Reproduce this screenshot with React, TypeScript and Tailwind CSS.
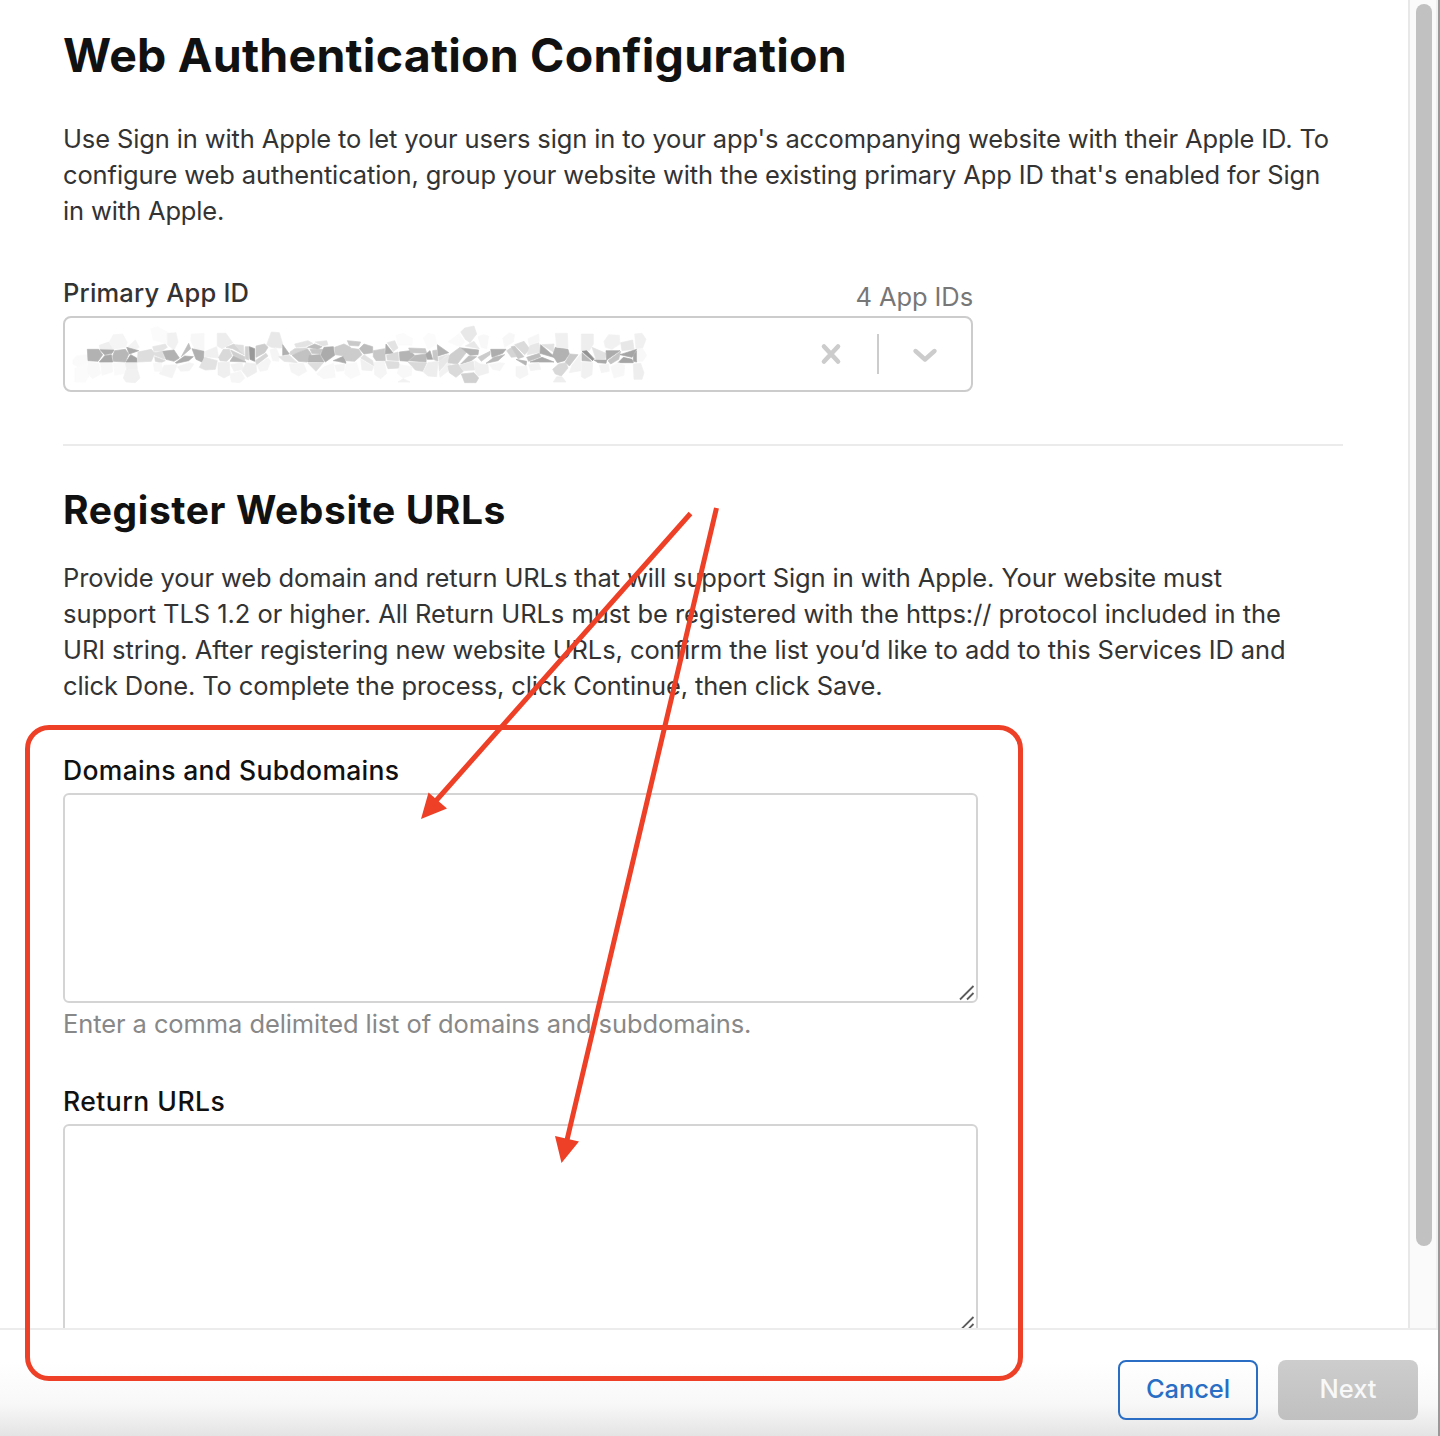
const RED = '#ee4026';

type Shape = [fill: string, points: string];

// Faceted tiles that hide the selected app identifier, left half.
const leftTiles: Shape[] = [
  ['#fafafa', '38,150 50,137 84,134 86,154 60,174 38,162'],
  ['#fbfbfb', '44,176 80,158 88,196 76,216 44,216'],
  ['#f9f9f9', '84,156 116,160 122,192 98,206 84,192'],
  ['#f8f8f8', '122,158 156,160 158,186 126,196'],
  ['#fafafa', '160,158 196,160 198,190 164,196'],
  ['#f0f0f0', '196,158 230,158 232,176 200,180'],
  ['#f1f1f1', '198,180 232,178 240,204 226,218 198,216 190,204'],
  ['#f5f5f5', '148,96 160,74 188,72 202,98 196,112 158,118'],
  ['#efefef', '118,106 146,96 158,118 120,118'],
  ['#f3f3f3', '204,110 226,90 238,112 226,118'],
  ['#fbfbfb', '272,56 292,50 322,66 318,100 280,90'],
  ['#f1f1f1', '322,70 348,68 354,96 342,120 322,104'],
  ['#f7f7f7', '394,72 432,70 432,122 404,116 392,92'],
  ['#b2b2b2', '82,118 116,118 128,134 114,154 84,152'],
  ['#ababab', '120,119 162,120 156,130 134,134'],
  ['#a8a8a8', '118,156 134,137 154,134 158,156'],
  ['#b7b7b7', '164,122 196,118 206,132 196,156 160,154 158,138'],
  ['#a9a9a9', '200,112 236,122 208,132'],
  ['#a4a4a4', '198,156 212,134 230,144 232,156'],
  ['#dddddd', '234,126 274,118 284,130 274,154 232,156'],
  ['#e5e5e5', '278,110 316,102 322,112 306,122 282,124'],
  ['#dedede', '282,128 306,124 314,148 284,136'],
  ['#d8d8d8', '284,140 316,152 302,158 286,154'],
  ['#b2b2b2', '308,124 342,120 358,144 342,154 318,148'],
  ['#bdbdbd', '364,140 386,100 392,116'],
  ['#ababab', '346,158 374,138 400,140 386,152 350,160'],
  ['#b0b0b0', '396,116 432,124 430,158 408,148'],
  ['#f0f0f0', '436,124 470,110 476,144 436,140'],
  ['#e2e2e2', '418,172 434,142 472,152 466,178 436,180'],
  ['#f4f4f4', '312,166 352,164 336,204 298,192'],
  ['#f4f4f4', '352,170 388,158 402,162 388,182 362,184'],
  ['#f8f8f8', '280,160 304,158 306,184 284,184'],
  ['#ededed', '472,70 498,70 518,98 486,116 472,108'],
  ['#d9d9d9', '476,142 490,118 508,118 516,138 500,154 480,152'],
  ['#d5d5d5', '498,112 522,102 552,134 518,116'],
  ['#cfcfcf', '512,120 554,140 554,154 520,136'],
  ['#b7b7b7', '510,154 520,138 558,156'],
  ['#dfdfdf', '524,104 550,106 552,134'],
  ['#d0d0d0', '556,110 566,110 566,150 556,146'],
  ['#999999', '568,110 584,116 584,154 570,148'],
  ['#cccccc', '588,108 614,102 624,112 614,128 588,142'],
  ['#d6d6d6', '586,152 618,130 624,138 590,164'],
  ['#efefef', '474,158 508,156 510,194 492,204 474,194'],
  ['#f2f2f2', '512,164 546,158 550,178 522,184'],
  ['#eeeeee', '546,182 558,158 588,162 590,186 562,202'],
  ['#f6f6f6', '510,192 542,184 554,204 540,218 514,216'],
  ['#f5f5f5', '592,166 624,144 632,154 622,180 600,184'],
  ['#e8e8e8', '620,104 634,66 658,68 668,102 664,114 634,112'],
  ['#f5f5f5', '630,120 648,114 658,136 656,154 638,152'],
  ['#b0b0b0', '668,104 688,132 668,136'],
  ['#e4e4e4', '656,140 688,136 712,158 672,154'],
  ['#d5d5d5', '690,126 704,116 740,114 714,130 692,134'],
  ['#c2c2c2', '696,136 742,116 754,132 742,156 716,154'],
  ['#bcbcbc', '742,112 764,102 786,110 774,118'],
  ['#c5c5c5', '750,118 788,118 780,132 756,130'],
  ['#b4b4b4', '748,136 780,134 792,156 744,156'],
  ['#ababab', '782,134 792,112 820,110 824,136 796,156'],
  ['#e3e3e3', '704,102 744,92 758,100 736,110 708,112'],
  ['#e2e2e2', '766,96 800,92 804,104 788,108'],
  ['#cccccc', '824,112 852,102 872,112 856,138 826,134'],
  ['#ababab', '820,152 852,138 858,160 834,154'],
  ['#dedede', '744,160 790,158 768,184'],
  ['#f5f5f5', '688,162 730,160 740,184 716,198 694,186'],
  ['#f8f8f8', '792,170 820,160 826,202 790,206 770,192'],
  ['#f5f5f5', '824,166 854,162 852,182 830,184'],
];

// Right half of the same run of tiles.
const rightTiles: Shape[] = [
  ['#c9c9c9', '22,92 62,96 56,108 28,106'],
  ['#bcbcbc', '58,116 72,102 98,110 98,128 72,132'],
  ['#cccccc', '10,140 28,114 56,118 66,134 44,154 18,152'],
  ['#f9f9f9', '18,162 50,158 60,194 32,206 14,192'],
  ['#e2e2e2', '62,144 72,134 98,152 102,168'],
  ['#f0f0f0', '62,148 100,170 96,182 66,180'],
  ['#c7c7c7', '100,122 134,116 136,152 108,152 100,140'],
  ['#adadad', '138,102 160,130 136,132'],
  ['#e3e3e3', '142,98 164,92 174,114 160,124'],
  ['#d9d9d9', '140,136 174,126 176,152 142,150'],
  ['#dddddd', '136,154 176,156 180,174 144,176'],
  ['#f5f5f5', '102,158 132,154 140,190 122,206 104,194'],
  ['#fbfbfb', '168,76 190,70 218,86 216,106 174,106'],
  ['#fbfbfb', '250,84 264,70 284,74 290,102 264,118'],
  ['#b4b4b4', '178,126 210,122 224,136 204,154 180,152'],
  ['#c7c7c7', '206,114 256,116 260,130 212,128'],
  ['#bababa', '208,152 226,136 260,132 258,156'],
  ['#a8a8a8', '258,132 270,122 278,148 262,148'],
  ['#c8c8c8', '278,122 290,120 294,154 280,148'],
  ['#b2b2b2', '292,104 326,128 294,138'],
  ['#e4e4e4', '296,142 322,134 298,154'],
  ['#d9d9d9', '204,156 260,158 248,184 226,180'],
  ['#f8f8f8', '180,164 216,170 214,196 188,204 172,190'],
  ['#f2f2f2', '174,216 190,206 210,216'],
  ['#ededed', '250,186 264,158 294,154 290,200 264,198'],
  ['#e7e7e7', '296,156 326,134 334,142 298,184'],
  ['#f2f2f2', '298,188 334,146 328,180 300,202'],
  ['#cecece', '330,134 360,112 380,126 352,162 324,158'],
  ['#b3b3b3', '364,114 416,120 414,134 390,136'],
  ['#e8e8e8', '376,108 402,94 418,116'],
  ['#e8e8e8', '362,66 374,54 402,48 410,72 390,98 376,88'],
  ['#fafafa', '324,96 358,70 374,96 360,110'],
  ['#f8f8f8', '414,80 430,74 446,78 440,116 424,112'],
  ['#bfbfbf', '362,162 386,138 410,140 394,152'],
  ['#cccccc', '414,142 450,124 450,134 424,154'],
  ['#adadad', '452,118 498,118 488,130 456,142'],
  ['#b8b8b8', '438,160 462,142 494,134 474,152'],
  ['#dadada', '324,168 354,162 370,184 348,202 328,188'],
  ['#d0d0d0', '364,192 402,188 416,204 408,218 374,218'],
  ['#e8e8e8', '358,166 400,154 404,180 370,182'],
  ['#f0f0f0', '404,152 420,162 444,164 446,188 414,198 406,186'],
  ['#f6f6f6', '448,164 480,158 494,160 480,182 458,178'],
  ['#f7f7f7', '488,84 508,68 524,74 520,96 494,112'],
  ['#d4d4d4', '500,122 516,112 530,140 514,142'],
  ['#c8c8c8', '514,110 524,108 552,140 534,146'],
  ['#dbdbdb', '524,104 552,94 570,118 554,134'],
  ['#e7e7e7', '570,106 596,98 604,126 562,134'],
  ['#b4b4b4', '528,148 560,154 558,166'],
  ['#bebebe', '560,142 598,130 602,140 566,154'],
  ['#aaaaaa', '602,104 648,144 600,130'],
  ['#aaaaaa', '570,156 606,142 642,156'],
  ['#e2e2e2', '606,104 642,102 640,126'],
  ['#b2b2b2', '638,136 646,112 684,118 688,132 674,152 652,158'],
  ['#f0f0f0', '646,70 682,70 684,114 650,112'],
  ['#d8d8d8', '638,178 656,162 678,158 684,174 664,198 646,192'],
  ['#c9c9c9', '676,156 690,132 714,134 688,168'],
  ['#eeeeee', '640,216 650,200 666,200 678,216'],
  ['#f2f2f2', '688,188 696,166 722,132 722,182'],
  ['#f5f5f5', '528,170 560,168 564,194 540,206 528,198'],
  ['#f3f3f3', '566,164 596,158 602,178 572,182'],
  ['#f6f6f6', '564,86 596,72 598,94 568,106'],
  ['#eeeeee', '724,72 760,72 760,102 748,122 724,122'],
  ['#939393', '726,124 740,122 762,146 758,152'],
  ['#b8b8b8', '726,128 754,154 726,152'],
  ['#e2e2e2', '756,112 798,130 796,146 768,148'],
  ['#a9a9a9', '762,150 800,150 798,160 774,158'],
  ['#f1f1f1', '724,156 758,158 756,194 734,206 724,200'],
  ['#f1f1f1', '792,94 806,74 838,76 840,102 816,118 796,112'],
  ['#ababab', '798,122 840,122 800,150'],
  ['#c4c4c4', '804,152 842,124 836,148 812,162'],
  ['#e7e7e7', '842,98 878,90 882,118 846,122'],
  ['#a5a5a5', '840,134 890,118 876,142'],
  ['#a5a5a5', '834,158 850,142 876,148 880,158'],
  ['#a5a5a5', '880,136 890,122 890,156 880,154'],
  ['#f4f4f4', '778,166 806,162 808,184 784,188'],
  ['#f7f7f7', '812,170 836,158 854,166 852,196 822,204'],
  ['#f0f0f0', '884,72 906,70 918,88 908,114 888,116'],
  ['#f8f8f8', '892,118 908,116 920,136 908,154 892,154'],
  ['#eeeeee', '880,162 902,160 912,188 906,208 882,208'],
];

function Tiles({ tiles }: { tiles: Shape[] }) {
  return (
    <>
      {tiles.map(([fill, points], i) => (
        <polygon key={i} points={points} fill={fill} stroke={fill} strokeWidth="2" />
      ))}
    </>
  );
}

function ResizeGrip() {
  return (
    <svg className="absolute right-px bottom-0 h-4 w-4" viewBox="0 0 16 16" stroke="#5c5c5c" strokeWidth="1.8">
      <path d="M1 14.5L14.5 1M8 14.5L14.5 8" />
    </svg>
  );
}

function TextArea() {
  return (
    <div className="relative h-[210px] w-[915px] rounded-[6px] border-2 border-[#d4d4d4] bg-white">
      <ResizeGrip />
    </div>
  );
}

export default function App() {
  return (
    <div className="relative flex h-[1436px] w-[1440px] overflow-hidden bg-white font-['Inter',sans-serif] text-[#333]">
      <div className="flex w-[1438px] flex-col">
        <div className="flex h-[1328px] overflow-hidden">
          <main className="w-[1408px] shrink-0 pl-[63px] whitespace-nowrap">
            <h1 className="mt-[25px] h-[61px] text-[46.5px] leading-[60px] font-bold tracking-[0.22px] text-[#111]">
              Web Authentication Configuration
            </h1>
            <div className="mt-[35px] text-[25.5px] leading-[36px]">
              <p className="tracking-[-0.13px]">Use Sign in with Apple to let your users sign in to your app's accompanying website with their Apple ID. To</p>
              <p className="tracking-[-0.12px]">configure web authentication, group your website with the existing primary App ID that's enabled for Sign</p>
              <p className="tracking-[-0.14px]">in with Apple.</p>
            </div>
            <div className="mt-[46px] flex h-[41px] w-[910px] justify-between text-[25.5px] leading-[36px]">
              <span className="font-medium tracking-[0.18px]">Primary App ID</span>
              <span className="pt-1 tracking-[-0.1px] text-[#777]">4 App IDs</span>
            </div>
            <div className="flex h-[76px] w-[910px] items-center rounded-[8px] border-2 border-[#ccc]">
              <svg className="mt-0.5 -ml-[5px] h-[90px] w-[610px] shrink-0" viewBox="0 0 1830 270">
                <Tiles tiles={leftTiles} />
                <g transform="translate(840 0)">
                  <Tiles tiles={rightTiles} />
                </g>
              </svg>
              <svg className="ml-[150px] h-[22px] w-[22px]" viewBox="0 0 22 22" stroke="#ccc" strokeWidth="4.6" strokeLinecap="round">
                <path d="M4 3.5L18 18.5M18 3.5L4 18.5" />
              </svg>
              <span className="ml-[35px] h-10 w-0.5 bg-[#ccc]" />
              <svg className="mt-0.5 ml-[33px] h-[16px] w-[26px]" viewBox="0 0 26 16" fill="none" stroke="#ccc" strokeWidth="4.4" strokeLinecap="round" strokeLinejoin="round">
                <path d="M3.5 4L13 12.5L22.5 4" />
              </svg>
            </div>
            <div className="mt-[52px] h-0.5 w-[1280px] bg-[#ebebeb]" />
            <h2 className="mt-[39px] h-[50px] text-[39px] leading-[50px] font-bold tracking-[0.58px] text-[#111]">Register Website URLs</h2>
            <div className="mt-[25px] text-[25.5px] leading-[36px]">
              <p className="tracking-[-0.11px]">Provide your web domain and return URLs that will support Sign in with Apple. Your website must</p>
              <p className="tracking-[-0.06px]">support TLS 1.2 or higher. All Return URLs must be registered with the https:// protocol included in the</p>
              <p className="tracking-[-0.08px]">URI string. After registering new website URLs, confirm the list you’d like to add to this Services ID and</p>
              <p className="tracking-[-0.13px]">click Done. To complete the process, click Continue, then click Save.</p>
            </div>
            <h3 className="mt-[48px] h-[41px] text-[26.5px] leading-[36px] font-medium tracking-[0.32px] text-[#111]">Domains and Subdomains</h3>
            <TextArea />
            <p className="mt-[3px] h-[36px] text-[25.5px] leading-[36px] tracking-[-0.09px] text-[#888]">Enter a comma delimited list of domains and subdomains.</p>
            <h3 className="mt-[41px] h-[41px] text-[26.5px] leading-[36px] font-medium tracking-[0.48px] text-[#111]">Return URLs</h3>
            <TextArea />
          </main>
          <div className="w-[30px] shrink-0 border-l-2 border-r-2 border-l-[#e8e8e8] border-r-[#efefef] bg-[#fafafa] pt-1 pl-1.5">
            <div className="h-[1242px] w-4 rounded-full bg-[#c1c1c1]" />
          </div>
        </div>
        <footer className="flex h-[108px] justify-end gap-5 border-t-2 border-[#ececec] bg-linear-to-b from-white from-30% via-[#f8f8f8] via-70% to-[#e4e4e4] pt-[30px] pr-5 text-[25.5px]">
          <button className="h-[60px] w-[140px] rounded-[8px] border-2 border-[#296dc4] pb-0.5 font-medium tracking-[-0.1px] text-[#296dc4]">Cancel</button>
          <button className="h-[60px] w-[140px] rounded-[8px] bg-linear-to-b from-[#cdcdcd] to-[#c0c0c0] pb-0.5 font-medium text-[#f8f8f8]">Next</button>
        </footer>
      </div>
      <div className="w-0.5 bg-[#999]" />

      <div className="pointer-events-none absolute top-[725px] left-[25px] h-[656px] w-[998px] rounded-[24px] border-5 border-[#ee4026]" />
      <svg className="pointer-events-none absolute inset-0" width="1440" height="1436" fill={RED}>
        <path d="M690.5 513.5L434 803M716.5 508L567 1140" stroke={RED} strokeWidth="5" />
        <path d="M421 819L428.500 792.500L447 808.500ZM561.500 1163L555 1136L579 1141.500Z" />
      </svg>
    </div>
  );
}
